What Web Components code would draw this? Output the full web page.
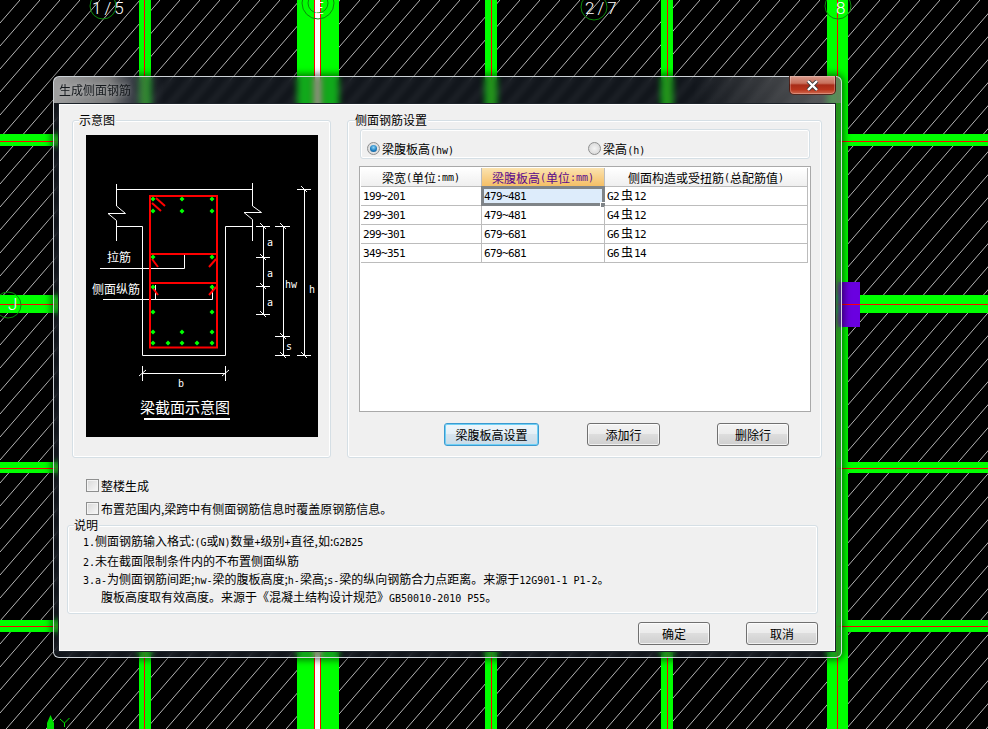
<!DOCTYPE html>
<html lang="zh">
<head>
<meta charset="utf-8">
<style>
  html, body { margin: 0; background: #000; overflow: hidden; }
  body { width: 988px; height: 729px; font: 12px "Noto Sans CJK SC", sans-serif; color: #000; }
</style>
</head>
<body>
<cad-canvas></cad-canvas>
<aero-dialog>
  <span slot="title">生成侧面钢筋</span>
  <div style="display:grid;grid-template-columns:259px 475px;column-gap:16px;margin-left:13px;height:338px">
    <group-box lx="6px">
      <span slot="legend">示意图</span>
      <section-diagram></section-diagram>
    </group-box>
    <group-box pad="8px 11px 0 12px">
      <span slot="legend">侧面钢筋设置</span>
      <radio-row></radio-row>
      <rebar-table></rebar-table>
      <div style="display:flex;margin:11px 0 0 84px">
        <win-button focused style="width:95px">梁腹板高设置</win-button>
        <win-button style="width:73px;margin-left:48px">添加行</win-button>
        <win-button style="width:72px;margin-left:57px">删除行</win-button>
      </div>
    </group-box>
  </div>
  <win-check style="margin:19px 0 0 27px">整楼生成</win-check>
  <win-check style="margin:7px 0 0 27px">布置范围内,梁跨中有侧面钢筋信息时覆盖原钢筋信息。</win-check>
  <group-box style="margin:9px 0 0 8px;width:751px;height:89px" pad="6px 0 0 15px" lx="6px">
    <span slot="legend">说明</span>
    <note-lines></note-lines>
  </group-box>
  <div style="display:flex;margin:8px 0 0 579px">
    <win-button style="width:72px">确定</win-button>
    <win-button style="width:72px;margin-left:36px">取消</win-button>
  </div>
</aero-dialog>

<script>
class CadCanvas extends HTMLElement {
  constructor() {
    super()
    const cols = [[139, 12, [144]], [297, 42, [314, 320]], [485, 12, [491]], [661, 12, [667]], [827, 21, [837]]]
    const rows = [[134, 12, 141], [295, 18, 304], [462, 11, 468], [620, 12, 626]]
    let bands = ''
    for (const [x, w, reds] of cols) {
      bands += `<rect x="${x}" y="0" width="${w}" height="729" fill="#00ff00"/>`
      if (w == 42) bands += `<rect x="315" y="0" width="5" height="729" fill="#fff"/>`
      for (const r of reds) bands += `<rect x="${r}" y="0" width="1" height="729" fill="#ff0000"/>`
    }
    for (const [y, h, r] of rows) {
      bands += `<rect x="0" y="${y}" width="988" height="${h}" fill="#00ff00"/><rect x="0" y="${r}" width="988" height="1" fill="#ff0000"/>`
    }
    this.attachShadow({ mode: 'open' }).innerHTML = `
      <style>
        :host { display: block; position: absolute; left: 0; top: 0; width: 988px; height: 729px; }
        svg { display: block; }
        text { font-family: Roboto, "Liberation Sans", sans-serif; font-weight: 300; fill: #fff; }
        circle { fill: none; stroke: #0a8a0a; }
      </style>
      <svg width="988" height="729" viewBox="0 0 988 729">
        <defs>
          <pattern id="hatch" width="20" height="23" patternUnits="userSpaceOnUse">
            <line x1="-2" y1="25.3" x2="22" y2="-2.3" stroke="#b4b4b4" stroke-width="1"/>
          </pattern>
        </defs>
        <rect width="988" height="729" fill="#000"/>
        <rect width="988" height="729" fill="url(#hatch)"/>
        ${bands}
        <rect x="838" y="282" width="22" height="45" fill="#6a00e0"/>
        <rect x="838" y="304" width="22" height="1" fill="#ff0000"/>
        <circle cx="103" cy="6" r="13"/>
        <text x="92" y="14" font-size="17" letter-spacing="3">1/5</text>
        <circle cx="318" cy="3" r="16"/>
        <circle cx="318" cy="3" r="10"/>
        <text x="314" y="14" font-size="17">E</text>
        <circle cx="594" cy="7" r="13"/>
        <text x="585" y="14" font-size="17" letter-spacing="3">2/7</text>
        <circle cx="838" cy="6" r="13"/>
        <text x="836" y="14" font-size="17">8</text>
        <circle cx="8" cy="305" r="13"/>
        <text x="8" y="310" font-size="17">J</text>
        <path d="M50.5 715 L54 723 V729 H47 V723 Z" fill="#00e000"/>
        <path d="M60 719 L64.500 723 L69.500 718 M64.500 723 V727" fill="none" stroke="#00e000"/>
      </svg>`
  }
}
customElements.define('cad-canvas', CadCanvas)

const dialogTemplate = document.createElement('template')
dialogTemplate.innerHTML = `
  <style>
    :host {
      display: flex; flex-direction: column; box-sizing: border-box;
      position: absolute; left: 53px; top: 76px; width: 789px; height: 582px;
      padding: 0 5px 5px 4px;
      border: 1px solid rgba(225,230,235,.9); border-radius: 6px;
      -webkit-backdrop-filter: blur(3px); backdrop-filter: blur(3px);
      background:
        linear-gradient(90deg, rgba(170,170,170,.92) 0, rgba(140,140,140,.85) 55px, rgba(90,95,105,.5) 78px, rgba(40,50,65,0) 110px, rgba(40,50,65,0) 640px, rgba(130,130,130,.6) 770px) 0 0 / 100% 26px no-repeat,
        rgba(40,50,65,.42);
      box-shadow: 0 0 7px 2px rgba(0,0,0,.55);
    }
    #bar { display: flex; align-items: flex-start; height: 26px; flex: none; }
    #title { margin: 4px 0 0 1px; line-height: 18px; color: #14181c; text-shadow: 0 0 6px rgba(255,255,255,.55); flex: 1; }
    #close {
      width: 47px; height: 19px; margin-top: -1px; box-sizing: border-box;
      display: flex; align-items: center; justify-content: center;
      border: 1px solid rgba(60,20,15,.85); border-top: none; border-radius: 0 0 5px 5px;
      background: linear-gradient(#d89a8c 0, #c8705c 40%, #a82c18 50%, #b8341c 75%, #d06a50 100%);
      box-shadow: 0 0 0 1px rgba(255,255,255,.25) inset;
    }
    #client {
      flex: 1; box-sizing: border-box; border: 1px solid #1c2229;
      background: #f0f0f0; box-shadow: 0 0 0 1px #fff inset; padding-top: 16px;
    }
  </style>
  <div id="bar">
    <div id="title"><slot name="title"></slot></div>
    <div id="close"><svg width="13" height="11" viewBox="0 0 13 11"><path d="M2 1 L11 10 M11 1 L2 10" stroke="#3a3a3a" stroke-width="4"/><path d="M2 1 L11 10 M11 1 L2 10" stroke="#fff" stroke-width="2.400"/></svg></div>
  </div>
  <div id="client"><slot></slot></div>
`
class AeroDialog extends HTMLElement {
  constructor() {
    super()
    this.attachShadow({ mode: 'open' }).appendChild(dialogTemplate.content.cloneNode(true))
  }
}
customElements.define('aero-dialog', AeroDialog)

const groupTemplate = document.createElement('template')
groupTemplate.innerHTML = `
  <style>
    :host {
      display: block; box-sizing: border-box; position: relative;
      border: 1px solid #d5dfe5; border-radius: 3px;
      box-shadow: 0 0 0 1px #fff inset;
    }
    #legend { position: absolute; left: 7px; top: -9px; line-height: 16px; background: #f0f0f0; padding-right: 1px; }
  </style>
  <div id="legend"><slot name="legend"></slot></div>
  <div id="body"><slot></slot></div>
`
class GroupBox extends HTMLElement {
  constructor() {
    super()
    this.attachShadow({ mode: 'open' }).appendChild(groupTemplate.content.cloneNode(true))
    this.shadowRoot.getElementById('body').style.padding = this.getAttribute('pad') || '14px 0 0 13px'
    if (this.hasAttribute('lx')) this.shadowRoot.getElementById('legend').style.left = this.getAttribute('lx')
  }
}
customElements.define('group-box', GroupBox)

class SectionDiagram extends HTMLElement {
  constructor() {
    super()
    const dots = [[153,199],[182,199],[212,199],[153,211],[182,211],[212,211],[153,257],[212,257],[153,287],[212,287],
      [153,312],[212,312],[153,332],[182,332],[212,332],[153,343],[168,343],[182,343],[197,343],[212,343]]
    const dotPath = dots.map(([x, y]) => `M${x} ${y - 2.500} L${x + 2.500} ${y} L${x} ${y + 2.500} L${x - 2.500} ${y} Z`).join(' ')
    const tick = (x1, x2, y, c) => `M${x1} ${y}.5 H${x2} M${c - 3} ${y - 3} L${c + 3} ${y + 3}`
    const dims = [tick(256, 270, 226, 263), tick(256, 270, 257, 263), tick(256, 270, 286, 263), tick(256, 270, 314, 263),
      tick(275, 290, 226, 283), tick(275, 290, 336, 283), tick(275, 290, 355, 283),
      tick(297, 311, 189, 304), tick(297, 311, 355, 304)].join(' ')
    this.attachShadow({ mode: 'open' }).innerHTML = `
      <style>
        :host { display: block; width: 232px; height: 302px; background: #000; }
        svg { display: block; }
        text { fill: #fff; font-family: "Noto Sans CJK SC", sans-serif; font-size: 12px; }
        .m { font-family: "DejaVu Sans Mono", monospace; font-size: 10px; }
      </style>
      <svg width="232" height="302" viewBox="86 135 232 302">
        <path fill="none" stroke="#fff" d="
          M116.500 184 V206 L125.500 213.500 H108 L116.500 220.500 V241
          M252.500 183 V206 L261.500 212.500 H244 L252.500 219.500 V241
          M116 189.500 H253
          M116 226.500 H142.500 V355.500 H225.500 V226.500 H253
          M100 268.500 H184.500 V254
          M103 299.500 H212.500 V285 M155.500 285 V299.500
          M263.500 226 V315 M283.500 226 V356 M304.500 189 V356
          M142.500 366 V381 M225.500 366 V381 M142 373.500 H226 M139 376 L146 370 M222 376 L229 370
          ${dims}"/>
        <path fill="none" stroke="#ff0000" stroke-width="2" d="
          M150 196 H217 V347.500 H150 Z M150 254 H217 M150 283 H217
          M156 198 L165 206 M152 203 L161 211 M152 259 L158 267 M216 259 L209 267 M152 287 L158 295 M216 287 L209 295"/>
        <path d="${dotPath}" fill="#00ff00"/>
        <text x="107" y="262">拉筋</text>
        <text x="92" y="294">侧面纵筋</text>
        <text class="m" x="267" y="246">a</text>
        <text class="m" x="267" y="277">a</text>
        <text class="m" x="267" y="306">a</text>
        <text class="m" x="285" y="288">hw</text>
        <text class="m" x="309" y="293">h</text>
        <text class="m" x="286" y="350">s</text>
        <text class="m" x="178" y="387">b</text>
        <text x="140" y="413" style="font-size:15px">梁截面示意图</text>
        <rect x="144" y="418" width="86" height="2" fill="#fff"/>
      </svg>`
  }
}
customElements.define('section-diagram', SectionDiagram)

class RadioRow extends HTMLElement {
  constructor() {
    super()
    this.attachShadow({ mode: 'open' }).innerHTML = `
      <style>
        :host {
          display: flex; align-items: center; box-sizing: border-box; height: 30px;
          border: 1px solid #d5dfe5; border-radius: 3px; box-shadow: 0 0 0 1px #fff inset; padding: 9px 0 0 6px;
        }
        .r { width: 13px; height: 13px; box-sizing: border-box; border-radius: 50%; border: 1px solid #8e8f8f; background: radial-gradient(circle, #f4f4f4 0, #dcdcdc 70%, #fff 100%); margin-right: 2px; display: flex; align-items: center; justify-content: center; }
        .on::after { content: ""; width: 7px; height: 7px; border-radius: 50%; background: radial-gradient(circle at 50% 35%, #8fd4f5 0, #1f7fc0 55%, #0b4a80 100%); }
        i { font: normal 10px "DejaVu Sans Mono", monospace; }
      </style>
      <span class="r on"></span><span>梁腹板高<i>(hw)</i></span>
      <span class="r" style="margin-left:134px"></span><span>梁高<i>(h)</i></span>`
  }
}
customElements.define('radio-row', RadioRow)

const tableRows = [
  ['199~201', '479~481', 'G2', '12'],
  ['299~301', '479~481', 'G4', '12'],
  ['299~301', '679~681', 'G6', '12'],
  ['349~351', '679~681', 'G6', '14']
]
class RebarTable extends HTMLElement {
  constructor() {
    super()
    const cells = tableRows.map(([w, h, g, d], i) => `
      <div class="c">${w}</div>
      <div class="c${i == 0 ? ' sel' : ''}">${h}</div>
      <div class="c">${g}<span class="zh">虫</span>${d}</div>`).join('')
    this.attachShadow({ mode: 'open' }).innerHTML = `
      <style>
        :host {
          display: block; box-sizing: border-box; width: 452px; height: 246px; margin: 7px 0 0 -1px;
          background: #fff; border: 1px solid #a9a9a9; padding: 1px;
        }
        #grid { display: grid; grid-template-columns: 121px 123px 203px; grid-auto-rows: 19px; }
        .h, .c { box-sizing: border-box; border-right: 1px solid #bcbcbc; border-bottom: 1px solid #bcbcbc; }
        .h { display: flex; align-items: center; justify-content: center; background: linear-gradient(#fff, #efefef); }
        .h i { font: normal 10px "DejaVu Sans Mono", monospace; }
        .act { background: linear-gradient(#fbe3b0, #f5bf66); color: #5a0a8c; }
        .c { font: 11px/17px "DejaVu Sans Mono", monospace; letter-spacing: -.62px; padding: 1px 0 0 2px; position: relative; }
        .zh { font: 12px/0 "Noto Sans CJK SC", sans-serif; letter-spacing: 0; margin: 0 1px 0 2px; }
        .sel { background: #ddecfb; }
        .sel::before { content: ""; position: absolute; left: -1px; top: -1px; right: -1px; bottom: -1px; border: 3px solid #7f8488; box-sizing: border-box; }
        .sel::after { content: ""; position: absolute; right: -2px; bottom: -3px; width: 4px; height: 4px; background: #7f8488; border: 1px solid #fff; }
      </style>
      <div id="grid">
        <div class="h">梁宽<i>(</i>单位<i>:mm)</i></div>
        <div class="h act">梁腹板高<i>(</i>单位<i>:mm)</i></div>
        <div class="h">侧面构造或受扭筋<i>(</i>总配筋值<i>)</i></div>
        ${cells}
      </div>`
  }
}
customElements.define('rebar-table', RebarTable)

const buttonTemplate = document.createElement('template')
buttonTemplate.innerHTML = `
  <style>
    :host {
      display: flex; align-items: center; justify-content: center; box-sizing: border-box; flex: none; height: 23px;
      border: 1px solid #707070; border-radius: 3px;
      background: linear-gradient(#f3f3f3 0, #ebebeb 50%, #dddddd 50%, #cfcfcf 100%);
      box-shadow: 0 0 0 1px rgba(255,255,255,.7) inset;
    }
    :host([focused]) {
      border-color: #3c9ad0;
      background: linear-gradient(#eef6fb 0, #e4eff6 50%, #d6e4ee 50%, #c8dbe8 100%);
      box-shadow: 0 0 0 1px #6fd0f5 inset;
    }
  </style>
  <slot></slot>
`
class WinButton extends HTMLElement {
  constructor() {
    super()
    this.attachShadow({ mode: 'open' }).appendChild(buttonTemplate.content.cloneNode(true))
  }
}
customElements.define('win-button', WinButton)

class WinCheck extends HTMLElement {
  constructor() {
    super()
    this.attachShadow({ mode: 'open' }).innerHTML = `
      <style>
        :host { display: flex; align-items: center; height: 16px; }
        #box { width: 13px; height: 13px; box-sizing: border-box; border: 1px solid #8e8f8f; background: linear-gradient(135deg, #d8d8d8, #f8f8f8); box-shadow: 0 0 0 1px #f4f4f4 inset; margin-right: 2px; }
      </style>
      <span id="box"></span><slot></slot>`
  }
}
customElements.define('win-check', WinCheck)

class NoteLines extends HTMLElement {
  constructor() {
    super()
    this.attachShadow({ mode: 'open' }).innerHTML = `
      <style>
        :host { display: block; white-space: nowrap; }
        div { line-height: 18px; height: 18px; }
        i { font: normal 10px "DejaVu Sans Mono", monospace; }
      </style>
      <div><i>1.</i>侧面钢筋输入格式:<i>(G</i>或<i>N)</i>数量<i>+</i>级别<i>+</i>直径,如:<i>G2B25</i></div>
      <div style="margin-top:2px"><i>2.</i>未在截面限制条件内的不布置侧面纵筋</div>
      <div><i>3.a-</i>为侧面钢筋间距;<i>hw-</i>梁的腹板高度;<i>h-</i>梁高;<i>s-</i>梁的纵向钢筋合力点距离。来源于<i>12G901-1 P1-2</i>。</div>
      <div style="margin-left:18px">腹板高度取有效高度。来源于《混凝土结构设计规范》<i>GB50010-2010 P55</i>。</div>`
  }
}
customElements.define('note-lines', NoteLines)
</script>
</body>
</html>
